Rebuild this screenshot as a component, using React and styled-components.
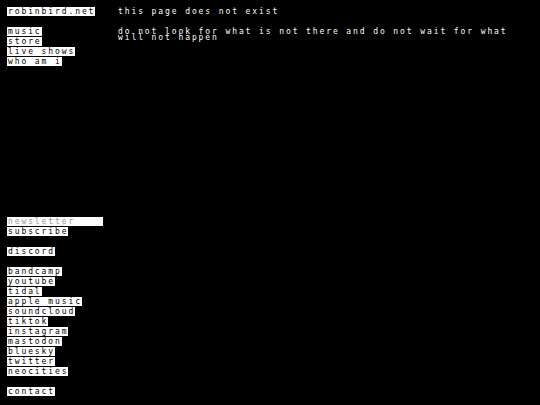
import styled, {createGlobalStyle} from "styled-components";

const Global = createGlobalStyle`
    html, body {
        margin: 0;
        padding: 0;
        background: #000;
    }
    body {
        font-family: "DejaVu Sans Mono", "Liberation Mono", monospace;
        font-size: 8px;
        letter-spacing: 1.9px;
        -webkit-font-smoothing: none;
    }
`;

const Page = styled.div`
    display: flex;
    height: 405px;
    box-sizing: border-box;
    padding: 7px 8px 8px 7px;
    background: #000;
`;

const Sidebar = styled.nav`
    display: flex;
    flex-direction: column;
    justify-content: space-between;
    width: 111px;
    flex-shrink: 0;
`;

const Group = styled.div`
    display: flex;
    flex-direction: column;
    align-items: flex-start;
`;

const Link = styled.a`
    display: block;
    height: 9px;
    line-height: 9px;
    margin-bottom: 1px;
    padding-left: 1px;
    background: #fff;
    color: #000;
    text-decoration: none;
    white-space: nowrap;
`;

const Spacer = styled.div`
    height: 10px;
`;

const Input = styled.input`
    display: block;
    box-sizing: border-box;
    width: 96px;
    height: 9px;
    margin: 0 0 1px;
    padding: 0 0 0 1px;
    border: none;
    outline: none;
    background: #fff;
    color: #000;
    font: inherit;
    letter-spacing: inherit;
    line-height: 9px;

    &::placeholder {
        color: #9a9a9a;
    }
`;

const Button = styled.button`
    display: block;
    height: 9px;
    margin: 0 0 1px;
    padding: 0 0 0 1px;
    border: none;
    background: #fff;
    color: #000;
    font: inherit;
    letter-spacing: inherit;
    line-height: 9px;
`;

const Main = styled.main`
    flex: 1;
    color: #fff;
`;

const Title = styled.h1`
    margin: 0;
    font-size: 8px;
    font-weight: normal;
    height: 9px;
    line-height: 9px;
`;

const Text = styled.p`
    margin: 13px 0 0;
    line-height: 6px;
`;

const topLinks = ["music", "store", "live shows", "who am i"];
const socials = [
    "bandcamp",
    "youtube",
    "tidal",
    "apple music",
    "soundcloud",
    "tiktok",
    "instagram",
    "mastodon",
    "bluesky",
    "twitter",
    "neocities",
];

export default function App() {
    return (
        <>
            <Global />
            <Page>
                <Sidebar>
                    <Group>
                        <Link href="#">robinbird.net</Link>
                        <Spacer />
                        {topLinks.map((l) => (
                            <Link key={l} href="#">{l}</Link>
                        ))}
                    </Group>
                    <Group>
                        <Input placeholder="newsletter" />
                        <Button>subscribe</Button>
                        <Spacer />
                        <Link href="#">discord</Link>
                        <Spacer />
                        {socials.map((l) => (
                            <Link key={l} href="#">{l}</Link>
                        ))}
                        <Spacer />
                        <Link href="#">contact</Link>
                    </Group>
                </Sidebar>
                <Main>
                    <Title>this page does not exist</Title>
                    <Text>
                        do not look for what is not there and do not wait for what will not happen
                    </Text>
                </Main>
            </Page>
        </>
    );
}
